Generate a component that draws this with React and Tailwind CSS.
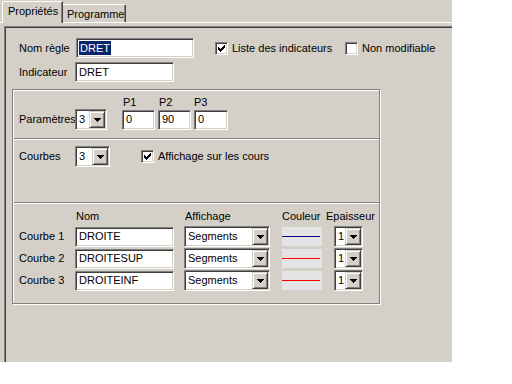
const sunken =
  'border border-[#808080] border-b-white border-r-white shadow-[inset_1px_1px_0_#404040,inset_-1px_-1px_0_#d4d0c8]';

const Edit = ({ w, value, selected }) => (
  <div className={`${sunken} ${w} h-[20px] bg-white flex items-center pl-[2px]`}>
    {selected ? (
      <span className="bg-[#0a246a] text-white px-[1px] leading-[14px]">{value}</span>
    ) : (
      <span className="pl-[1px]">{value}</span>
    )}
  </div>
);

const DropBtn = () => (
  <div className="w-[16px] h-full bg-[#d4d0c8] border border-[#d4d0c8] border-b-[#404040] border-r-[#404040] shadow-[inset_1px_1px_0_#fff,inset_-1px_-1px_0_#808080] flex items-center justify-center shrink-0">
    <svg width="7" height="4" viewBox="0 0 7 4" shapeRendering="crispEdges">
      <path d="M0 0h7L3.5 4z" fill="#000" />
    </svg>
  </div>
);

const Combo = ({ w, value }) => (
  <div className={`${sunken} ${w} h-[21px] bg-white flex p-[1px]`}>
    <div className="flex-1 flex items-center pl-[2px] overflow-hidden">{value}</div>
    <DropBtn />
  </div>
);

const Check = ({ checked }) => (
  <div className={`${sunken} w-[13px] h-[13px] bg-white flex items-center justify-center shrink-0`}>
    {checked && (
      <svg width="7" height="7" viewBox="0 0 7 7" shapeRendering="crispEdges">
        <path d="M0 2L2 4L7 0L7 3L2 7L0 5Z" fill="#000" />
      </svg>
    )}
  </div>
);

const Swatch = ({ color }) => (
  <div className="w-[40px] h-[19px] bg-[#e4e4e4] flex items-center">
    <div className={`w-[38px] h-px ${color}`} />
  </div>
);

const courbes = [
  { label: 'Courbe 1', nom: 'DROITE', color: 'bg-[#000080]' },
  { label: 'Courbe 2', nom: 'DROITESUP', color: 'bg-[#ff0000]' },
  { label: 'Courbe 3', nom: 'DROITEINF', color: 'bg-[#ff0000]' },
];

export default function App() {
  return (
    <div className="w-[512px] h-[384px] bg-white font-['Liberation_Sans',Arial,sans-serif] text-[11px] leading-[13px] text-black">
      <div className="w-[452px] h-[362px] bg-[#d4d0c8] flex flex-col overflow-hidden">
        {/* onglets */}
        <div className="h-[23px] flex items-end border-b border-white shrink-0">
          <div className="ml-[2px] w-[61px] h-[22px] -mb-px bg-[#d4d0c8] border-l border-t border-white border-r border-r-[#404040] shadow-[inset_-1px_0_0_#808080] rounded-tl-[2px] pl-[5px] pt-[3px]">
            Propriétés
          </div>
          <div className="w-[63px] h-[18px] border-t border-white border-r border-r-[#404040] shadow-[inset_-1px_0_0_#808080] rounded-tr-[2px] pl-[4px] pt-[3px]">
            Programme
          </div>
        </div>

        {/* panneau */}
        <div className="flex-1 pl-[4px] pt-[3px]">
          <div className="h-full border-l border-t border-[#808080] shadow-[inset_1px_1px_0_#404040] pl-[7px] pt-[11px]">
            <div className="ml-[7px] h-[20px] flex items-center">
              <span className="w-[57px]">Nom règle</span>
              <Edit w="w-[118px]" value="DRET" selected />
              <div className="ml-[21px] w-[130px] flex items-center gap-[4px]">
                <Check checked />
                <span>Liste des indicateurs</span>
              </div>
              <div className="flex items-center gap-[4px]">
                <Check />
                <span>Non modifiable</span>
              </div>
            </div>
            <div className="ml-[7px] mt-[4px] h-[20px] flex items-center">
              <span className="w-[56px]">Indicateur</span>
              <Edit w="w-[99px]" value="DRET" />
            </div>

            {/* groupe */}
            <div className="mt-[7px] w-[368px] h-[215px] border border-[#808080] shadow-[inset_1px_1px_0_#fff,1px_1px_0_#fff] flex flex-col">
              <div className="h-[48px] pl-[6px] pt-[6px] shrink-0">
                <div className="flex h-[13px]">
                  <div className="w-[103px]" />
                  <div className="w-[33px] pl-[1px]">P1</div>
                  <div className="w-[33px] ml-[3px] pl-[1px]">P2</div>
                  <div className="w-[34px] ml-[2px] pl-[1px]">P3</div>
                </div>
                <div className="flex items-center">
                  <span className="w-[56px]">Paramètres</span>
                  <Combo w="w-[32px]" value="3" />
                  <div className="ml-[15px] flex gap-[3px]">
                    <Edit w="w-[33px]" value="0" />
                    <Edit w="w-[33px]" value="90" />
                    <Edit w="w-[34px]" value="0" />
                  </div>
                </div>
              </div>
              <div className="h-[2px] border-t border-[#808080] border-b border-b-white shrink-0 ml-px" />

              <div className="h-[62px] pl-[6px] pt-[6px] shrink-0">
                <div className="flex items-center">
                  <span className="w-[56px]">Courbes</span>
                  <Combo w="w-[35px]" value="3" />
                  <div className="ml-[31px] flex items-center gap-[4px]">
                    <Check checked />
                    <span>Affichage sur les cours</span>
                  </div>
                </div>
              </div>
              <div className="h-[2px] border-t border-[#808080] border-b border-b-white shrink-0 ml-px" />

              <div className="flex-1 pl-[6px] pt-[6px]">
                <div className="flex h-[13px]">
                  <div className="w-[56px]" />
                  <div className="w-[109px] pl-[1px]">Nom</div>
                  <div className="w-[98px] pl-[1px]">Affichage</div>
                  <div className="w-[40px]">Couleur</div>
                  <div className="ml-[4px]">Epaisseur</div>
                </div>
                <div className="mt-[3px] flex flex-col gap-px">
                  {courbes.map((c) => (
                    <div key={c.label} className="flex items-center h-[21px]">
                      <span className="w-[56px]">{c.label}</span>
                      <Edit w="w-[99px]" value={c.nom} />
                      <div className="ml-[10px]">
                        <Combo w="w-[86px]" value="Segments" />
                      </div>
                      <div className="ml-[12px]">
                        <Swatch color={c.color} />
                      </div>
                      <div className="ml-[12px]">
                        <Combo w="w-[29px]" value="1" />
                      </div>
                    </div>
                  ))}
                </div>
              </div>
            </div>
          </div>
        </div>
      </div>
    </div>
  );
}
